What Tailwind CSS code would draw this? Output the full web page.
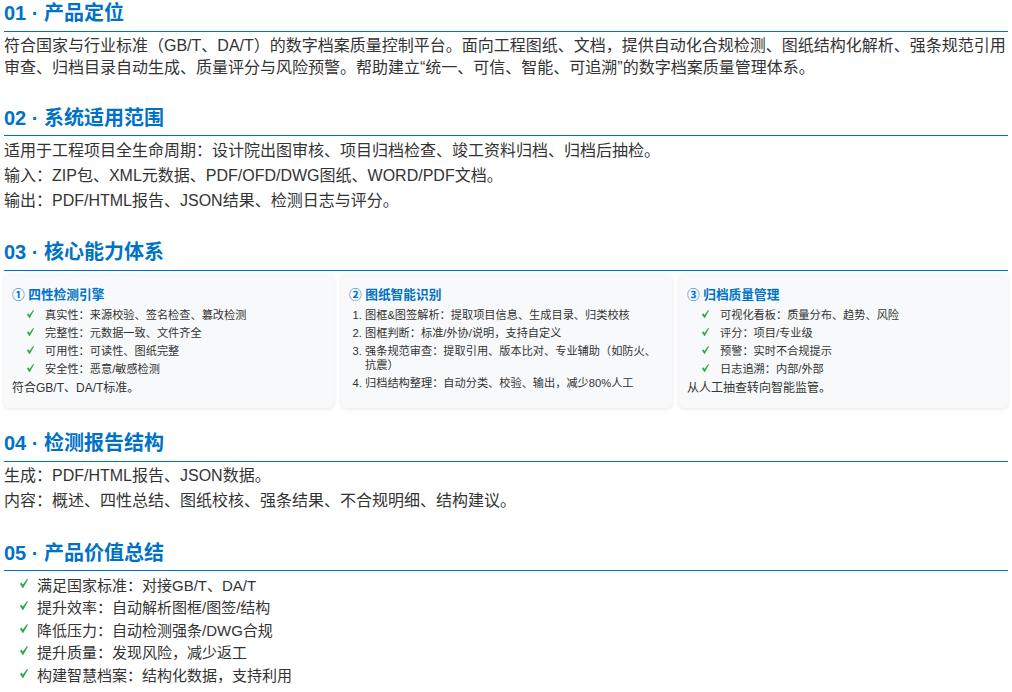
<!DOCTYPE html>
<html lang="zh-CN">
<head>
<meta charset="utf-8">
<script src="https://cdn.jsdelivr.net/npm/@tailwindcss/browser@4"></script>
</head>
<body class="bg-white overflow-hidden font-['Liberation_Sans','Noto_Sans_CJK_SC',sans-serif] text-[#333333]">
<main class="w-[1012px] h-[692px] px-1 overflow-hidden">
  <section>
    <h2 class="h-[32px] border-b border-[#0072c6] text-[20px] leading-[26px] font-bold text-[#0072c6]">01 · 产品定位</h2>
    <p class="mt-[3px] text-[16px] leading-[22px]">符合国家与行业标准（GB/T、DA/T）的数字档案质量控制平台。面向工程图纸、文档，提供自动化合规检测、图纸结构化解析、强条规范引用审查、归档目录自动生成、质量评分与风险预警。帮助建立“统一、可信、智能、可追溯”的数字档案质量管理体系。</p>
  </section>
  <section class="mt-[25px]">
    <h2 class="h-[32px] border-b border-[#0072c6] text-[20px] leading-[28px] font-bold text-[#0072c6]">02 · 系统适用范围</h2>
    <div class="mt-[2px] text-[16px] leading-[25px]">
      <p>适用于工程项目全生命周期：设计院出图审核、项目归档检查、竣工资料归档、归档后抽检。</p>
      <p>输入：ZIP包、XML元数据、PDF/OFD/DWG图纸、WORD/PDF文档。</p>
      <p>输出：PDF/HTML报告、JSON结果、检测日志与评分。</p>
    </div>
  </section>
  <section class="mt-[26px]">
    <h2 class="h-[32px] border-b border-[#0072c6] text-[20px] leading-[26px] font-bold text-[#0072c6]">03 · 核心能力体系</h2>
    <div class="mt-[3px] grid grid-cols-[330px_331px_1fr] gap-[7px] items-stretch text-[11.2px]">
      <div class="h-[134px] rounded-md bg-[#f8f9fa] px-2 pt-[13px] shadow-[0_1px_4px_rgba(0,0,0,0.1)]">
        <h3 class="text-[12.7px] leading-[17px] font-bold text-[#0072c6]">① 四性检测引擎</h3>
        <ul class="mt-[2px] leading-[18px]">
          <li class="flex"><svg class="ml-[15px] mr-[11px] mt-[4px] w-[7px] h-[8px] shrink-0 fill-[#2ea84f]" viewBox="0 0 8 9"><path d="M0 5 L1.4 3.6 L2.9 5.6 L7 0 L8 .6 L3.2 9 L2.6 9 Z"/></svg><span>真实性：来源校验、签名检查、篡改检测</span></li>
          <li class="flex"><svg class="ml-[15px] mr-[11px] mt-[4px] w-[7px] h-[8px] shrink-0 fill-[#2ea84f]" viewBox="0 0 8 9"><path d="M0 5 L1.4 3.6 L2.9 5.6 L7 0 L8 .6 L3.2 9 L2.6 9 Z"/></svg><span>完整性：元数据一致、文件齐全</span></li>
          <li class="flex"><svg class="ml-[15px] mr-[11px] mt-[4px] w-[7px] h-[8px] shrink-0 fill-[#2ea84f]" viewBox="0 0 8 9"><path d="M0 5 L1.4 3.6 L2.9 5.6 L7 0 L8 .6 L3.2 9 L2.6 9 Z"/></svg><span>可用性：可读性、图纸完整</span></li>
          <li class="flex"><svg class="ml-[15px] mr-[11px] mt-[4px] w-[7px] h-[8px] shrink-0 fill-[#2ea84f]" viewBox="0 0 8 9"><path d="M0 5 L1.4 3.6 L2.9 5.6 L7 0 L8 .6 L3.2 9 L2.6 9 Z"/></svg><span>安全性：恶意/敏感检测</span></li>
        </ul>
        <p class="mt-[1px] text-[12px] leading-[18px]">符合GB/T、DA/T标准。</p>
      </div>
      <div class="h-[134px] rounded-md bg-[#f8f9fa] px-2 pt-[13px] shadow-[0_1px_4px_rgba(0,0,0,0.1)]">
        <h3 class="text-[12.7px] leading-[17px] font-bold text-[#0072c6]">② 图纸智能识别</h3>
        <ol class="mt-[4px] leading-[14px] list-decimal pl-[16px] flex flex-col gap-[4px]">
          <li>图框&amp;图签解析：提取项目信息、生成目录、归类校核</li>
          <li>图框判断：标准/外协/说明，支持自定义</li>
          <li>强条规范审查：提取引用、版本比对、专业辅助（如防火、抗震）</li>
          <li>归档结构整理：自动分类、校验、输出，减少80%人工</li>
        </ol>
      </div>
      <div class="h-[134px] rounded-md bg-[#f8f9fa] px-2 pt-[13px] shadow-[0_1px_4px_rgba(0,0,0,0.1)]">
        <h3 class="text-[12.7px] leading-[17px] font-bold text-[#0072c6]">③ 归档质量管理</h3>
        <ul class="mt-[2px] leading-[18px]">
          <li class="flex"><svg class="ml-[15px] mr-[11px] mt-[4px] w-[7px] h-[8px] shrink-0 fill-[#2ea84f]" viewBox="0 0 8 9"><path d="M0 5 L1.4 3.6 L2.9 5.6 L7 0 L8 .6 L3.2 9 L2.6 9 Z"/></svg><span>可视化看板：质量分布、趋势、风险</span></li>
          <li class="flex"><svg class="ml-[15px] mr-[11px] mt-[4px] w-[7px] h-[8px] shrink-0 fill-[#2ea84f]" viewBox="0 0 8 9"><path d="M0 5 L1.4 3.6 L2.9 5.6 L7 0 L8 .6 L3.2 9 L2.6 9 Z"/></svg><span>评分：项目/专业级</span></li>
          <li class="flex"><svg class="ml-[15px] mr-[11px] mt-[4px] w-[7px] h-[8px] shrink-0 fill-[#2ea84f]" viewBox="0 0 8 9"><path d="M0 5 L1.4 3.6 L2.9 5.6 L7 0 L8 .6 L3.2 9 L2.6 9 Z"/></svg><span>预警：实时不合规提示</span></li>
          <li class="flex"><svg class="ml-[15px] mr-[11px] mt-[4px] w-[7px] h-[8px] shrink-0 fill-[#2ea84f]" viewBox="0 0 8 9"><path d="M0 5 L1.4 3.6 L2.9 5.6 L7 0 L8 .6 L3.2 9 L2.6 9 Z"/></svg><span>日志追溯：内部/外部</span></li>
        </ul>
        <p class="mt-[1px] text-[12px] leading-[18px]">从人工抽查转向智能监管。</p>
      </div>
    </div>
  </section>
  <section class="mt-[22px]">
    <h2 class="h-[32px] border-b border-[#0072c6] text-[20px] leading-[26px] font-bold text-[#0072c6]">04 · 检测报告结构</h2>
    <div class="mt-[1px] text-[16px] leading-[25px]">
      <p>生成：PDF/HTML报告、JSON数据。</p>
      <p>内容：概述、四性总结、图纸校核、强条结果、不合规明细、结构建议。</p>
    </div>
  </section>
  <section class="mt-[26px]">
    <h2 class="h-[32px] border-b border-[#0072c6] text-[20px] leading-[28px] font-bold text-[#0072c6]">05 · 产品价值总结</h2>
    <ul class="mt-[4px] text-[15px] leading-[22.4px]">
      <li class="flex"><svg class="ml-[16px] mr-[9px] mt-[4px] w-[8px] h-[9px] shrink-0 fill-[#2ea84f]" viewBox="0 0 8 9"><path d="M0 5 L1.4 3.6 L2.9 5.6 L7 0 L8 .6 L3.2 9 L2.6 9 Z"/></svg><span>满足国家标准：对接GB/T、DA/T</span></li>
      <li class="flex"><svg class="ml-[16px] mr-[9px] mt-[4px] w-[8px] h-[9px] shrink-0 fill-[#2ea84f]" viewBox="0 0 8 9"><path d="M0 5 L1.4 3.6 L2.9 5.6 L7 0 L8 .6 L3.2 9 L2.6 9 Z"/></svg><span>提升效率：自动解析图框/图签/结构</span></li>
      <li class="flex"><svg class="ml-[16px] mr-[9px] mt-[4px] w-[8px] h-[9px] shrink-0 fill-[#2ea84f]" viewBox="0 0 8 9"><path d="M0 5 L1.4 3.6 L2.9 5.6 L7 0 L8 .6 L3.2 9 L2.6 9 Z"/></svg><span>降低压力：自动检测强条/DWG合规</span></li>
      <li class="flex"><svg class="ml-[16px] mr-[9px] mt-[4px] w-[8px] h-[9px] shrink-0 fill-[#2ea84f]" viewBox="0 0 8 9"><path d="M0 5 L1.4 3.6 L2.9 5.6 L7 0 L8 .6 L3.2 9 L2.6 9 Z"/></svg><span>提升质量：发现风险，减少返工</span></li>
      <li class="flex"><svg class="ml-[16px] mr-[9px] mt-[4px] w-[8px] h-[9px] shrink-0 fill-[#2ea84f]" viewBox="0 0 8 9"><path d="M0 5 L1.4 3.6 L2.9 5.6 L7 0 L8 .6 L3.2 9 L2.6 9 Z"/></svg><span>构建智慧档案：结构化数据，支持利用</span></li>
    </ul>
  </section>
</main>
</body>
</html>
